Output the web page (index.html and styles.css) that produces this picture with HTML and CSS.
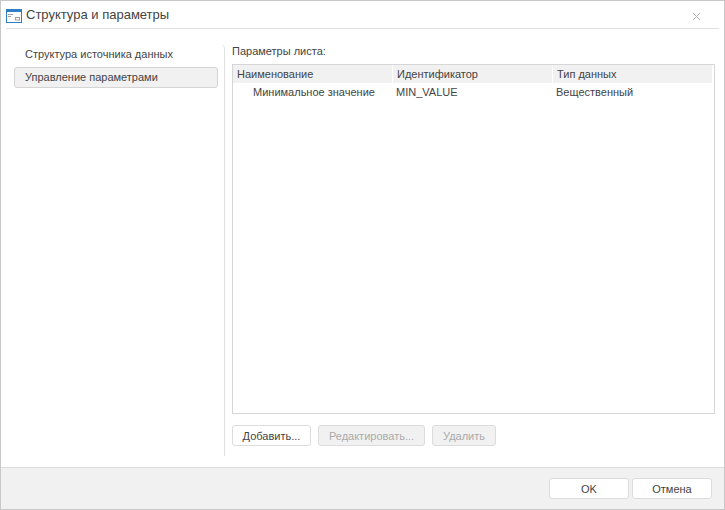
FILE: index.html
```html
<!DOCTYPE html>
<html lang="ru">
<head>
<meta charset="utf-8">
<title>Структура и параметры</title>
<link rel="stylesheet" href="styles.css">
</head>
<body>
<div class="dialog">
  <header class="titlebar">
    <svg class="app-icon" width="16" height="14" viewBox="0 0 16 14">
      <rect x="0.5" y="0.5" width="15" height="13" fill="#fff" stroke="#2f7fc4"/>
      <rect x="0" y="0" width="16" height="3" fill="#2f7fc4"/>
      <path d="M2 5.5h5M2 7.5h3" stroke="#a0a0a0" fill="none"/>
      <rect x="9.5" y="8.5" width="4" height="2.5" fill="none" stroke="#a0a0a0"/>
    </svg>
    <span class="title">Структура и параметры</span>
    <svg class="close" width="9" height="9" viewBox="0 0 9 9">
      <path d="M1 1l7 7M8 1l-7 7" stroke="#b4b4b4" fill="none"/>
    </svg>
  </header>
  <main class="body">
    <nav class="side">
      <div class="side-item">Структура источника данных</div>
      <div class="side-item active">Управление параметрами</div>
    </nav>
    <section class="content">
      <div class="label">Параметры листа:</div>
      <div class="table">
        <div class="row head">
          <div class="cell c1">Наименование</div>
          <div class="cell c2">Идентификатор</div>
          <div class="cell c3">Тип данных</div>
        </div>
        <div class="row data">
          <div class="cell d1 indent">Минимальное значение</div>
          <div class="cell d2">MIN_VALUE</div>
          <div class="cell c3">Вещественный</div>
        </div>
      </div>
      <div class="actions">
        <button class="btn add">Добавить...</button>
        <button class="btn edit" disabled>Редактировать...</button>
        <button class="btn del" disabled>Удалить</button>
      </div>
    </section>
  </main>
  <footer class="footer">
    <button class="btn foot">OK</button>
    <button class="btn foot">Отмена</button>
  </footer>
</div>
</body>
</html>
```

FILE: styles.css
```css
* { box-sizing: border-box; }
html, body { margin: 0; padding: 0; }
body {
  width: 725px;
  height: 510px;
  font-family: "Liberation Sans", Arial, sans-serif;
  font-size: 11px;
  color: #444;
  background: #fff;
}
.dialog {
  width: 725px;
  height: 510px;
  border: 1px solid #c8c8c8;
  display: flex;
  flex-direction: column;
  background: #fff;
}
.titlebar {
  height: 28px;
  margin: 0 5px;
  border-bottom: 1px solid #e0e0e0;
  display: flex;
  align-items: center;
  flex: none;
}
.app-icon { flex: none; margin-top: 3px; }
.title {
  margin-left: 4px;
  font-size: 13px;
  color: #444;
  flex: 1;
}
.close { margin-right: 18px; margin-top: 3px; }
.body {
  flex: 1;
  display: flex;
  min-height: 0;
  padding: 15px 0 11px 13px;
}
.side {
  width: 211px;
  flex: none;
  border-right: 1px solid #e0e0e0;
  border-top-right-radius: 5px;
  padding-right: 6px;
}
.side-item {
  height: 21px;
  line-height: 19px;
  padding-left: 10px;
  border: 1px solid transparent;
  margin-bottom: 2px;
}
.side-item.active {
  background: #f1f1f1;
  border-color: #d4d4d4;
  border-radius: 3px;
}
.content {
  flex: 1;
  min-width: 0;
  padding-left: 7px;
  padding-right: 9px;
  display: flex;
  flex-direction: column;
}
.label { height: 20px; line-height: 14px; }
.table {
  height: 350px;
  border: 1px solid #d6d6d6;
  background: #fff;
}
.row { display: flex; }
.head {
  height: 18px;
  gap: 1px;
  margin-right: 2px;
}
.head .cell { background: #f1f1f1; padding-left: 4px; }
.data { height: 18px; }
.cell { line-height: 18px; padding-left: 3px; }
.c1, .c2 { width: 159px; }
.d1, .d2 { width: 160px; }
.c3 { flex: 1; }
.indent { padding-left: 20px; }
.actions {
  display: flex;
  gap: 7px;
  margin-top: 11px;
}
.btn {
  font: inherit;
  height: 21px;
  padding: 0;
  border: 1px solid #dcdcdc;
  border-radius: 3px;
  background: #fff;
  color: #444;
}
.btn:disabled { background: #f1f1f1; color: #aaa; }
.add { width: 79px; }
.edit { width: 107px; }
.del { width: 64px; }
.footer {
  height: 42px;
  flex: none;
  background: #f1f1f1;
  border-top: 1px solid #dcdcdc;
  display: flex;
  justify-content: flex-end;
  align-items: center;
  gap: 3px;
  padding-right: 12px;
}
.foot { width: 80px; height: 21px; }
```
